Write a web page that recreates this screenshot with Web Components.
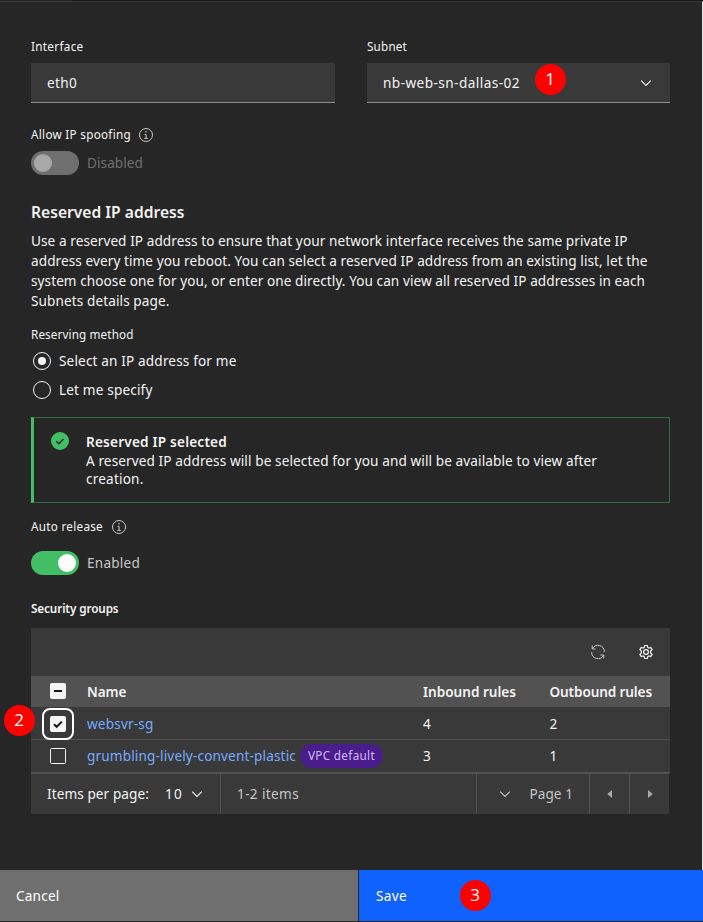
<!DOCTYPE html>
<html lang="en">
<head>
<meta charset="utf-8">
<title>Edit network interface</title>
<style>
html,body{margin:0;height:100%;background:#262626}
body{font:13.6px/20px "Noto Sans",Roboto,sans-serif;color:#f4f4f4;overflow:hidden}
</style>
</head>
<body>
<vpc-panel></vpc-panel>
<script>
function define(name, html, setup) {
  const template = document.createElement('template');
  template.innerHTML = html;
  customElements.define(name, class extends HTMLElement {
    connectedCallback() {
      if (this.shadowRoot) return;
      this.attachShadow({ mode: 'open' }).append(template.content.cloneNode(true));
      if (setup) setup(this, this.shadowRoot);
    }
  });
}

/* A line of text whose tracking spreads it over the width given by w. */
define('x-text', `<style>
:host{display:block;white-space:pre;width:max-content;flex:none}
:host([label]){font-size:11.7px;line-height:14px;padding-bottom:2px}
:host([strong]){font-weight:600}
:host([muted]){color:#c6c6c6}
:host([disabled]){color:#6f6f6f}
</style><slot></slot>`, host => {
  const w = +host.getAttribute('w');
  if (!w) return;
  const natural = host.getBoundingClientRect().width;
  host.style.letterSpacing = ((w - natural) / host.textContent.length).toFixed(3) + 'px';
});

const icons = {
  info: '<circle cx="8" cy="8" r="6.5" fill="none" stroke="currentColor"/><path d="M6.3 11.4h3.5M8.1 11.5V7.4H6.5" fill="none" stroke="currentColor"/><circle cx="8" cy="4.8" r=".8" fill="currentColor"/>',
  chevron: '<path d="M3.2 5.7 8 10.5l4.8-4.8" fill="none" stroke="currentColor" stroke-width="1.1"/>',
  left: '<path d="M10 4 5.2 8l4.8 4z" fill="currentColor"/>',
  right: '<path d="M6 4l4.8 4L6 12z" fill="currentColor"/>',
  renew: '<path d="M5.6 5H2.2V1.6M2.4 4.8A6.3 6.3 0 0 1 14.3 8M10.4 11h3.4v3.4M13.6 11.2A6.3 6.3 0 0 1 1.7 8" fill="none" stroke="currentColor"/>',
  gear: '<path d="M6.7 1.5h2.6l.4 1.9 1.2.7 1.9-.6 1.3 2.2-1.5 1.3v2l1.5 1.3-1.3 2.2-1.9-.6-1.2.7-.4 1.9H6.7l-.4-1.9-1.2-.7-1.9.6-1.3-2.2L3.4 9V7L1.9 5.7l1.3-2.2 1.9.6 1.2-.7z" fill="none" stroke="currentColor" stroke-width="1.2"/><circle cx="8" cy="8" r="2.4" fill="none" stroke="currentColor" stroke-width="1.2"/>'
};
define('x-icon', `<style>:host{display:block;width:16px;height:16px;flex:none}svg{display:block}</style><svg width="16" height="16" viewBox="0 0 16 16"></svg>`,
  (host, root) => { root.querySelector('svg').innerHTML = icons[host.getAttribute('name')]; });

define('x-marker', `<style>
:host{position:absolute;box-sizing:border-box;width:31px;height:31px;padding-right:1px;border-radius:50%;background:#f00;color:#fff;font:17px/29px "Open Sans","Noto Sans",sans-serif;text-align:center}
</style><slot></slot>`);

define('x-field', `<style>
:host{display:flex;flex-direction:column;gap:8px;position:relative}
.box{box-sizing:border-box;height:40px;padding:0 16px;display:flex;align-items:center;justify-content:space-between;background:#393939;border-bottom:1px solid #8d8d8d}
</style><slot name="label"></slot><div class="box"><slot></slot></div><slot name="marker"></slot>`);

define('x-toggle', `<style>
:host{display:flex;align-items:center;gap:8px;height:24px}
.track{box-sizing:border-box;width:48px;height:24px;border-radius:12px;padding:3px;display:flex;background:#6f6f6f}
.knob{width:18px;height:18px;border-radius:50%;background:#a8a8a8}
:host([on]) .track{background:#42be65;justify-content:flex-end}
:host([on]) .knob{background:#fff}
</style><div class="track"><div class="knob"></div></div><slot></slot>`);

define('x-radio', `<style>
:host{display:flex;align-items:center;gap:8px;height:20px;padding-left:2px}
.ring{box-sizing:border-box;width:18px;height:18px;border:1px solid #f4f4f4;border-radius:50%;display:grid;place-items:center}
:host([checked]) .ring::after{content:"";width:8px;height:8px;border-radius:50%;background:#f4f4f4}
</style><div class="ring"></div><slot></slot>`);

define('x-check', `<style>
:host{display:grid;place-items:center;box-sizing:border-box;width:32px;height:32px;flex:none}
:host([focused]){border:2px solid #fff;border-radius:8px;align-self:end}
:host([state=mixed]){height:30px;align-self:start}
svg{display:block}
rect{fill:none;stroke:#f4f4f4}
path{fill:none;stroke:none;stroke-width:2}
:host([state]) rect{fill:#f4f4f4}
:host([state=checked]) .tick,:host([state=mixed]) .dash{stroke:#161616}
</style><svg width="16" height="16"><rect x=".5" y=".5" width="15" height="15" rx="1"/><path class="tick" d="m4 8.2 2.7 2.6 5.2-5.2"/><path class="dash" d="M4 8h8"/></svg>`);

define('x-notice', `<style>
:host{display:flex;gap:17px;box-sizing:border-box;height:86px;padding:15px 16px 0 17px;border:1px solid #306b41;border-left:3px solid #42be65;line-height:18px}
svg{flex:none;margin-top:-1px}
</style><svg width="18" height="20" viewBox="0 0 18 20"><circle cx="9" cy="9" r="9" fill="#42be65"/><path d="m5.2 9.2 2.6 2.5 4.8-4.8" fill="none" stroke="#262626" stroke-width="1.4"/></svg><div><slot></slot></div>`);

define('x-tag', `<style>
:host{display:flex;align-items:center;box-sizing:border-box;height:24px;width:83px;padding-left:8px;border-radius:12px;background:#491d8b;color:#d4bbff}
</style><slot></slot>`);

define('x-row', `<style>
:host{display:grid;grid-template-columns:45px 336px 126.5px 1fr;align-items:center;box-sizing:border-box;height:33px;padding-left:11px;border-bottom:1px solid #525252}
:host([head]){height:31px;background:#525252;border:0}
:host([first]){padding-top:1px}
.name{display:flex;align-items:center;gap:4px}
:host(:not([head])) .name{color:#78a9ff}
</style><slot name="check"></slot><div class="name"><slot name="name"></slot></div><slot></slot>`);

define('x-pagination', `<style>
:host{display:flex;box-sizing:border-box;width:638px;height:41px;border-top:1px solid #525252}
div{display:flex;align-items:center;box-sizing:border-box}
.size{width:190px;padding-left:16px;border-right:1px solid #525252}
.size x-icon{margin-left:6px}
.size .n{margin-left:16px}
.range{flex:1;padding-left:16px}
.page{width:113px;border-left:1px solid #525252;padding-left:20px;gap:16.5px;color:#c6c6c6}
.nav{width:40px;border-left:1px solid #525252;justify-content:center;color:#a8a8a8}
</style>
<div class="size"><x-text w="102">Items per page:</x-text><x-text class="n" w="18">10</x-text><x-icon name="chevron"></x-icon></div>
<div class="range"><x-text muted w="62">1-2 items</x-text></div>
<div class="page"><x-icon name="chevron"></x-icon><x-text w="43.5">Page 1</x-text></div>
<div class="nav"><x-icon name="left"></x-icon></div><div class="nav"><x-icon name="right"></x-icon></div>`);

define('x-table', `<style>
:host{display:block;position:relative;height:186px;background:linear-gradient(#393939,#393939) 0 0/638px 100% no-repeat,linear-gradient(#393939,#393939) 0 0/639px 145px no-repeat}
.tools{display:flex;align-items:center;justify-content:flex-end;gap:32px;height:48px;padding-right:16px;color:#f4f4f4}
.tools x-icon:first-child{color:#c6c6c6}
x-marker{left:-27px;top:77px}
</style>
<div class="tools"><x-icon name="renew"></x-icon><x-icon name="gear"></x-icon></div>
<x-row head><x-check slot="check" state="mixed"></x-check><x-text slot="name" strong w="39.5">Name</x-text><x-text strong w="93">Inbound rules</x-text><x-text strong w="102.5">Outbound rules</x-text></x-row>
<x-row first><x-check slot="check" state="checked" focused></x-check><x-text slot="name" w="66.5">websvr-sg</x-text><x-text>4</x-text><x-text>2</x-text></x-row>
<x-row><x-check slot="check"></x-check><x-text slot="name" w="209">grumbling-lively-convent-plastic</x-text><x-tag slot="name"><x-text label w="67">VPC default</x-text></x-tag><x-text>3</x-text><x-text>1</x-text></x-row>
<x-pagination></x-pagination>
<x-marker>2</x-marker>`);

define('x-actions', `<style>
:host{display:flex;gap:1px;height:51px;margin-bottom:1px}
div{display:flex;align-items:center;box-sizing:border-box;background:#6f6f6f;width:358px;padding-left:16px;color:#fff}
.save{flex:1;background:#0f62fe;position:relative;padding-left:17px}
x-marker{left:101px;top:10px}
</style><div><x-text w="43.5">Cancel</x-text></div><div class="save"><x-text w="31">Save</x-text><x-marker>3</x-marker></div>`);

define('vpc-panel', `<style>
:host{display:flex;flex-direction:column;height:922px;box-sizing:border-box;
background:linear-gradient(90deg,#262626 72px,#161616 0) 0 0/100% 1px no-repeat,#262626;padding-top:1px}
main{flex:1;box-sizing:border-box;padding:37px 32px 0 31px;border-top:1px solid #393939;border-right:1px solid #e8e8e8}
.fields{display:grid;grid-template-columns:304px 303px;gap:32px}
.label{display:flex;align-items:center;gap:7px;height:16px;color:#f4f4f4}
.label x-icon{color:#c6c6c6}
h3{margin:25px 0 7px;font-size:15.6px;line-height:24px;font-weight:600}
.radios{display:grid;gap:9px;margin:8px 0 17px}
x-field x-marker{left:168px;top:25px}
</style>
<main>
<div class="fields">
<x-field><x-text slot="label" label w="52.5">Interface</x-text><x-text w="30">eth0</x-text></x-field>
<x-field><x-text slot="label" label w="40">Subnet</x-text><x-text w="137">nb-web-sn-dallas-02</x-text><x-icon name="chevron"></x-icon><x-marker slot="marker">1</x-marker></x-field>
</div>
<div class="label" style="margin:24px 0 8px"><x-text label w="100">Allow IP spoofing</x-text><x-icon name="info"></x-icon></div>
<x-toggle><x-text disabled w="56">Disabled</x-text></x-toggle>
<h3><x-text w="153.5">Reserved IP address</x-text></h3>
<x-text w="596.5">Use a reserved IP address to ensure that your network interface receives the same private IP</x-text>
<x-text w="616.5">address every time you reboot. You can select a reserved IP address from an existing list, let the</x-text>
<x-text w="614">system choose one for you, or enter one directly. You can view all reserved IP addresses in each</x-text>
<x-text w="138.5">Subnets details page.</x-text>
<x-text label w="102.5" style="margin-top:16px">Reserving method</x-text>
<div class="radios"><x-radio checked><x-text w="177.5">Select an IP address for me</x-text></x-radio><x-radio><x-text w="93.5">Let me specify</x-text></x-radio></div>
<x-notice><x-text strong w="141" style="margin-bottom:1px">Reserved IP selected</x-text><x-text w="511">A reserved IP address will be selected for you and will be available to view after</x-text><x-text w="57.5">creation.</x-text></x-notice>
<div class="label" style="margin:16px 0;gap:8px"><x-text label w="72">Auto release</x-text><x-icon name="info"></x-icon></div>
<x-toggle on><x-text muted w="53">Enabled</x-text></x-toggle>
<x-text label strong w="87.5" style="margin:26px 0 11px">Security groups</x-text>
<x-table></x-table>
</main>
<x-actions></x-actions>`);
</script>
</body>
</html>
